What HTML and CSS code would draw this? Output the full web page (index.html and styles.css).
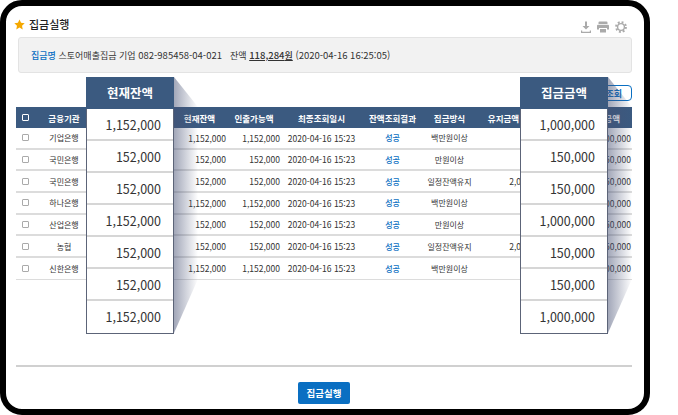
FILE: index.html
```html
<!DOCTYPE html>
<html lang="ko">
<head>
  <meta charset="UTF-8" />
  <title>집금실행</title>
  <link rel="stylesheet" href="styles.css">
</head>
<body>
  <div class="frame">
    <div class="title-row">
      <svg class="star" viewBox="0 0 24 24" width="11" height="11"><path d="M12 1l3.400 7.300 7.900 1-5.800 5.500 1.500 7.900L12 18.800l-7 3.900 1.500-7.900L.7 9.300l7.900-1z" fill="#f5a800"/></svg>
      <h2>집금실행</h2>
      <div class="tools">
        <svg viewBox="0 0 10 12" width="10" height="12"><path d="M4 0.500h2v4.500h2.500L5 8.500 1.500 5H4zM0 9.500h1.200v1.300h7.600V9.500H10v2.500H0z" fill="#aaa"/></svg>
        <svg viewBox="0 0 12 12" width="12" height="12"><path d="M2.500 0.500h7A1 1 0 0 1 10.500 1.500V3h-9V1.500a1 1 0 0 1 1-1zM1 3.800h10A1 1 0 0 1 12 4.800V8.500h-2V7H2v1.500H0V4.800a1 1 0 0 1 1-1zM3 8h6v3.500H3z" fill="#aaa"/></svg>
        <svg viewBox="0 0 12 12" width="12" height="12"><circle cx="6" cy="6" r="3.400" fill="none" stroke="#aaa" stroke-width="1.400"/><circle cx="6" cy="6" r="4.900" fill="none" stroke="#aaa" stroke-width="2" stroke-dasharray="1.900 1.950"/></svg>
      </div>
    </div>

    <div class="info">
      <span class="info-label">집금명</span> <span class="kr">스토어매출집금 기업</span> 082-985458-04-021 &nbsp; <span class="kr">잔액</span> <u class="info-amount">118,284<span class="kr">원</span></u> (2020-04-16 16:25:05)
    </div>

    <div class="toolbar"><button class="btn-line">잔액조회</button></div>

    <div class="grid">
      <div class="row head">
        <span><i class="check"></i></span><span>금융기관</span><span></span><span>현재잔액</span><span>인출가능액</span><span>최종조회일시</span><span>잔액조회결과</span><span>집금방식</span><span class="keep">유지금액</span><span class="last">집금금액</span>
      </div>
      <div class="row">
        <span><i class="check"></i></span><span>기업은행</span><span></span><span class="num">1,152,000</span><span class="num">1,152,000</span><span class="date">2020-04-16 15:23</span><span class="ok">성공</span><span>백만원이상</span><span class="num"></span><span class="num">1,000,000</span>
      </div>
      <div class="row">
        <span><i class="check"></i></span><span>국민은행</span><span></span><span class="num">152,000</span><span class="num">152,000</span><span class="date">2020-04-16 15:23</span><span class="ok">성공</span><span>만원이상</span><span class="num"></span><span class="num">150,000</span>
      </div>
      <div class="row">
        <span><i class="check"></i></span><span>국민은행</span><span></span><span class="num">152,000</span><span class="num">152,000</span><span class="date">2020-04-16 15:23</span><span class="ok">성공</span><span>일정잔액유지</span><span class="num">2,000,000</span><span class="num">150,000</span>
      </div>
      <div class="row">
        <span><i class="check"></i></span><span>하나은행</span><span></span><span class="num">1,152,000</span><span class="num">1,152,000</span><span class="date">2020-04-16 15:23</span><span class="ok">성공</span><span>백만원이상</span><span class="num"></span><span class="num">1,000,000</span>
      </div>
      <div class="row">
        <span><i class="check"></i></span><span>산업은행</span><span></span><span class="num">152,000</span><span class="num">152,000</span><span class="date">2020-04-16 15:23</span><span class="ok">성공</span><span>만원이상</span><span class="num"></span><span class="num">150,000</span>
      </div>
      <div class="row">
        <span><i class="check"></i></span><span>농협</span><span></span><span class="num">152,000</span><span class="num">152,000</span><span class="date">2020-04-16 15:23</span><span class="ok">성공</span><span>일정잔액유지</span><span class="num">2,000,000</span><span class="num">150,000</span>
      </div>
      <div class="row">
        <span><i class="check"></i></span><span>신한은행</span><span></span><span class="num">1,152,000</span><span class="num">1,152,000</span><span class="date">2020-04-16 15:23</span><span class="ok">성공</span><span>백만원이상</span><span class="num"></span><span class="num">1,000,000</span>
      </div>
    </div>

    <div class="foot"><button class="btn-run">집금실행</button></div>

    <div class="callout callout-left">
      <div class="callout-shadow"></div>
      <div class="callout-head">현재잔액</div>
      <div class="callout-val">1,152,000</div>
      <div class="callout-val">152,000</div>
      <div class="callout-val">152,000</div>
      <div class="callout-val">1,152,000</div>
      <div class="callout-val">152,000</div>
      <div class="callout-val">152,000</div>
      <div class="callout-val">1,152,000</div>
    </div>

    <div class="callout callout-right">
      <div class="callout-shadow"></div>
      <div class="callout-head">집금금액</div>
      <div class="callout-val">1,000,000</div>
      <div class="callout-val">150,000</div>
      <div class="callout-val">150,000</div>
      <div class="callout-val">1,000,000</div>
      <div class="callout-val">150,000</div>
      <div class="callout-val">150,000</div>
      <div class="callout-val">1,000,000</div>
    </div>
  </div>
</body>
</html>
```

FILE: styles.css
```css
body {
  margin: 0;
  background: #fff;
  font-family: "Noto Sans CJK KR", "Noto Sans", sans-serif;
  color: #333;
}

.frame {
  position: relative;
  box-sizing: border-box;
  width: 650px;
  height: 415px;
  padding: 10px 12px 0 10px;
  border: 6px solid #000;
  border-radius: 22px;
  background: #fff;
}

.title-row {
  display: flex;
  align-items: center;
  height: 16px;
  margin-bottom: 5px;
  padding-right: 5px;
}

.star {
  margin: 0 4px 0 -2px;
}

h2 {
  margin: 0;
  font-size: 11px;
  font-weight: 500;
  color: #222;
}

.tools {
  display: flex;
  align-items: center;
  gap: 6px;
  margin: 6px 0 0 auto;
}

.info {
  box-sizing: border-box;
  height: 36px;
  margin-left: 2px;
  padding: 0 12px;
  line-height: 34px;
  font-size: 9.5px;
  color: #333;
  background: #f2f2f2;
  border: 1px solid #e3e3e3;
  border-radius: 3px;
}

.kr {
  font-size: 9px;
}

.info-label {
  font-size: 9px;
  color: #0a6fc2;
  font-weight: 500;
}

.info-amount {
  font-weight: 500;
}

.toolbar {
  display: flex;
  justify-content: flex-end;
  margin: 12px 0 6px;
}

.btn-line {
  box-sizing: border-box;
  width: 70px;
  height: 16px;
  padding: 0 9px 0 0;
  text-align: right;
  font: 700 9px "Noto Sans CJK KR", sans-serif;
  color: #0a6fc2;
  background: #fff;
  border: 1px solid #0a6fc2;
  border-radius: 4px;
}

.row {
  display: grid;
  grid-template-columns: 18px 60px 78px 55px 54px 81px 61px 53px 72px 84px;
  align-items: center;
  box-sizing: border-box;
  height: 21.67px;
  font-size: 8px;
  color: #333;
  text-align: center;
  white-space: nowrap;
  border-bottom: 2px solid #dcdcdc;
}

.row:last-child {
  border-bottom-width: 1px;
}

.row.head {
  height: 21px;
  font-size: 8.5px;
  font-weight: 700;
  color: #fff;
  background: #3b5a80;
  border-bottom: 0;
}

.head .keep {
  padding-right: 17px;
}

.head .last {
  padding-right: 12px;
  text-align: right;
}

.check {
  display: block;
  box-sizing: border-box;
  width: 7px;
  height: 7px;
  margin: 0 auto;
  background: #fff;
  border: 1px solid #aaa;
  border-radius: 1px;
}

.head .check {
  border-color: #fff;
  background: none;
}

.num {
  font-size: 8.5px;
  text-align: right;
  padding-right: 1px;
}

.date {
  font-size: 8.5px;
}

.ok {
  color: #0a6fc2;
  font-weight: 500;
}

.foot {
  margin-top: 85px;
  padding-top: 11px;
  text-align: center;
  border-top: 2px solid #d0d0d0;
}

.btn-run {
  width: 52px;
  height: 22px;
  padding: 0;
  font: 700 9.5px "Noto Sans CJK KR", sans-serif;
  color: #fff;
  background: #0a6fc2;
  border: 0;
  border-radius: 2px;
}

.callout {
  position: absolute;
  top: 71px;
  box-sizing: border-box;
  width: 88px;
  background: #fff;
  border: 1px solid #5c6478;
  border-top: 0;
}

.callout-left {
  left: 80px;
}

.callout-right {
  left: 514px;
}

.callout-shadow {
  position: absolute;
  top: 0;
  left: 100%;
  margin-left: 1px;
  width: 24px;
  height: 256px;
  background: linear-gradient(to right, rgba(70, 80, 115, 0.5), rgba(70, 80, 115, 0));
  clip-path: polygon(0 0, 100% 30px, 100% 202px, 0 100%);
}

.callout-head {
  height: 32px;
  line-height: 31px;
  text-align: center;
  font-size: 12.5px;
  font-weight: 700;
  color: #fff;
  background: #3b5a80;
  margin: 0 -1px;
}

.callout-val {
  box-sizing: border-box;
  height: 32px;
  padding-right: 12px;
  line-height: 31px;
  text-align: right;
  font-size: 12.5px;
  color: #333;
  border-bottom: 2px solid #d6d6d6;
}

.callout-val:last-child {
  border-bottom: 0;
}
```
